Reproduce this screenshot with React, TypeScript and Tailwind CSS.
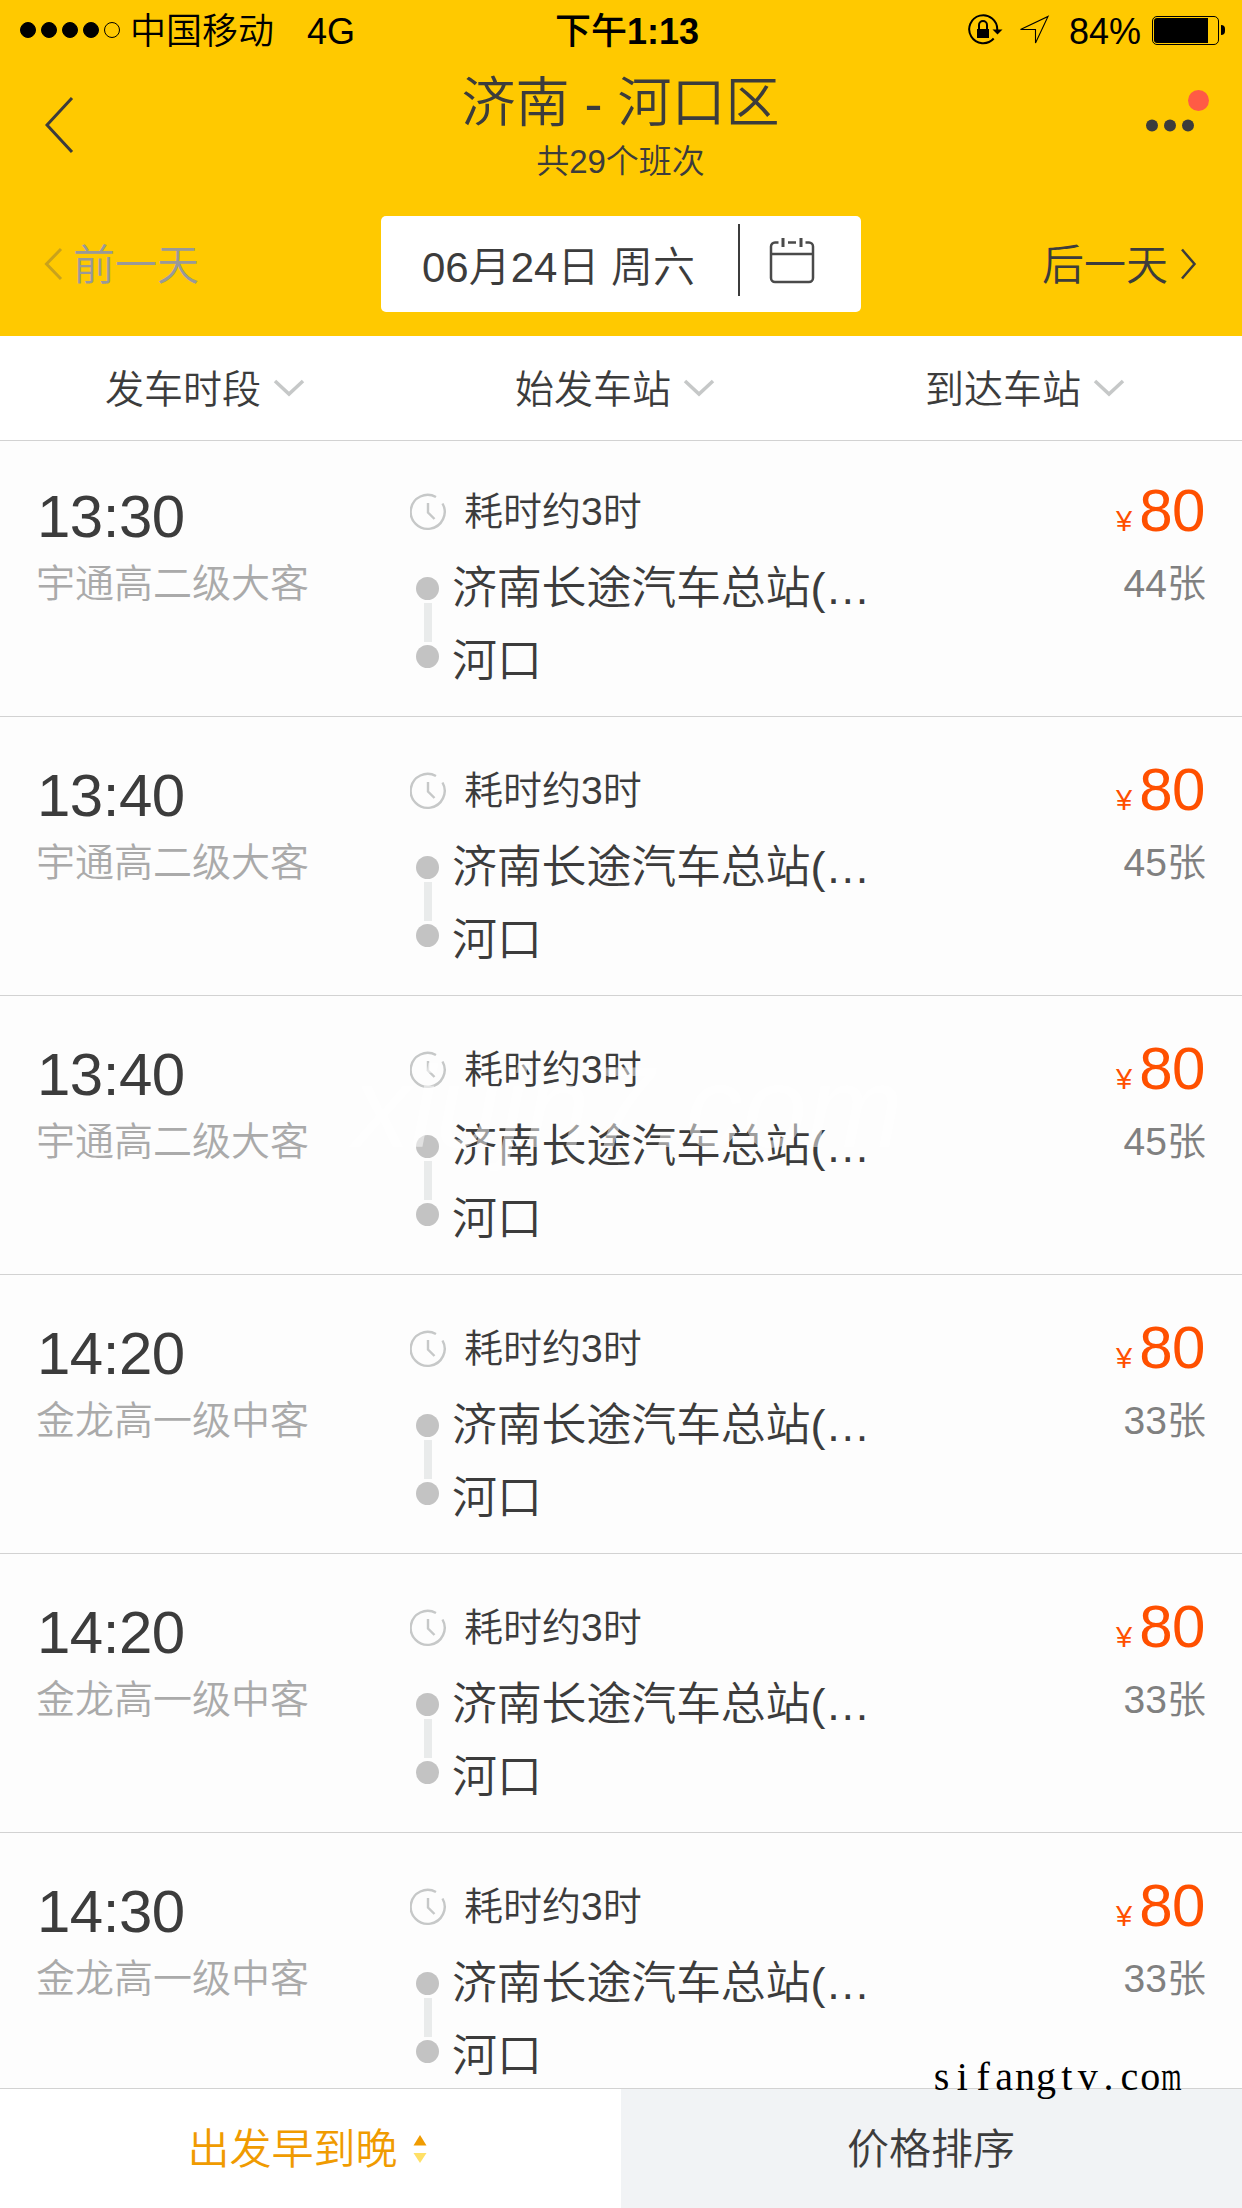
import clsx from 'clsx';

const filters = ['发车时段', '始发车站', '到达车站'];

const trips = [
  { time: '13:30', bus: '宇通高二级大客', price: 80, left: 44 },
  { time: '13:40', bus: '宇通高二级大客', price: 80, left: 45 },
  { time: '13:40', bus: '宇通高二级大客', price: 80, left: 45 },
  { time: '14:20', bus: '金龙高一级中客', price: 80, left: 33 },
  { time: '14:20', bus: '金龙高一级中客', price: 80, left: 33 },
  { time: '14:30', bus: '金龙高一级中客', price: 80, left: 33 },
];

function StatusBar() {
  return (
    <div className="relative flex h-[60px] items-center justify-between pl-5 pr-[17px] text-[36px] leading-[60px] text-black">
      <div className="flex items-center">
        <div className="flex gap-[5px]">
          {[0, 1, 2, 3, 4].map((i) => (
            <span
              key={i}
              className={clsx('size-4 rounded-full border border-black', i < 4 && 'bg-black')}
            />
          ))}
        </div>
        <span className="ml-[10px] pt-[4px]">中国移动</span>
        <span className="ml-[33px] pt-1">4G</span>
      </div>
      <div className="absolute inset-x-0 top-[2px] pl-[12px] text-center font-medium">
        下午<span className="font-bold">1:13</span>
      </div>
      <div className="flex items-center">
        <svg className="-ml-px" width="36" height="38" viewBox="0 0 36 38" fill="none">
          <path d="M30.200 19a14 14 0 1 0-3.500 8.500" stroke="#000" strokeWidth="2" />
          <path d="M25.500 18.500h10l-5 5z" fill="#000" />
          <path d="M10 18h12v9H10z" fill="#000" />
          <path d="M12 18v-4a4 4 0 0 1 8 0v4" stroke="#000" strokeWidth="2" />
        </svg>
        <svg className="ml-[16px]" width="32" height="34" viewBox="0 0 32 34" fill="none">
          <path d="M1.500 16.500 29 3.500 16.500 30V16.500z" stroke="#000" strokeWidth="1.100" />
        </svg>
        <span className="ml-[18px] pt-1">84%</span>
        <div className="ml-[11px] h-[29px] w-[67px] rounded-[5px] border border-black p-px">
          <div className="h-full w-[54px] rounded-l-[3px] bg-black" />
        </div>
        <div className="ml-[2px] h-[10px] w-1 rounded-r-full bg-black" />
      </div>
    </div>
  );
}

function Header() {
  return (
    <header className="h-[336px] bg-[#ffc900] text-[#3c3c3c]">
      <StatusBar />
      <div className="flex h-[134px] justify-between pl-[45px] pr-[33px]">
        <svg className="mt-[36px]" width="51" height="58" viewBox="0 0 51 58" fill="none">
          <path d="M27 2 2 29l25 27" stroke="#3c3c3c" strokeWidth="3" />
        </svg>
        <div className="flex flex-col items-center">
          <h1 className="mt-[15px] text-[54px] leading-[56px]">济南 - 河口区</h1>
          <p className="mt-[12px] text-[33px] leading-[38px]">共29个班次</p>
        </div>
        <svg className="mt-[28px]" width="64" height="50" viewBox="0 0 64 50">
          <circle cx="7" cy="37.500" r="6" fill="#3c3c3c" />
          <circle cx="25" cy="37.500" r="6" fill="#3c3c3c" />
          <circle cx="43" cy="37.500" r="6" fill="#3c3c3c" />
          <circle cx="53.500" cy="12.500" r="10.500" fill="#ff5b45" />
        </svg>
      </div>
      <div className="mt-[22px] flex h-24 items-center justify-between pl-[44px] pr-[44px] text-[42px]">
        <div className="flex w-[156px] items-center text-[#999]">
          <svg width="19" height="34" viewBox="0 0 19 34" fill="none">
            <path d="M17 2 2.500 17 17 32" stroke="#c9a21c" strokeWidth="3" />
          </svg>
          <span className="ml-[10px] pt-[2px]">前一天</span>
        </div>
        <div className="flex h-24 w-[480px] items-center rounded-[5px] bg-white pl-[41px]">
          <span className="w-[316px] whitespace-nowrap pt-[7px]">06月24日 周六</span>
          <span className="-mt-[8px] h-[72px] w-[2px] bg-[#3c3c3c]" />
          <svg className="-mt-[7px] ml-[29px]" width="46" height="48" viewBox="0 0 46 48" fill="none" stroke="#4a4a4a">
            <path d="M9.500 5.500H6a4 4 0 0 0-4 4V41a4 4 0 0 0 4 4h34a4 4 0 0 0 4-4V9.500a4 4 0 0 0-4-4h-3.500M19 5.500h8M2 17h42" strokeWidth="2.500" />
            <path d="M14 1v9M32 1v9" strokeWidth="3" />
          </svg>
        </div>
        <div className="flex w-[156px] items-center">
          <span className="whitespace-nowrap pt-[2px]">后一天</span>
          <svg className="ml-[12px] shrink-0" width="17" height="34" viewBox="0 0 17 34" fill="none">
            <path d="M2 2.500 14.500 17 2 31.500" stroke="#3c3c3c" strokeWidth="2.500" />
          </svg>
        </div>
      </div>
    </header>
  );
}

function TripRow({ trip }: { trip: (typeof trips)[number] }) {
  return (
    <li className="flex h-[279px] shrink-0 border-b border-[#d2d2d2] px-9">
      <div className="w-[374px] pt-[49px]">
        <div className="pl-px text-[60px] leading-[60px] tracking-[-0.5px]">{trip.time}</div>
        <div className="mt-[15px] text-[39px] leading-[44px] text-[#aaa]">{trip.bus}</div>
      </div>
      <div className="pt-[52px]">
        <div className="flex items-center text-[39px] leading-[44px]">
          <svg width="36" height="38" viewBox="0 0 36 38" fill="none" stroke="#c6c8c8" strokeWidth="2.400">
            <path d="M26 4A17 17 0 1 0 32.500 10.500" />
            <path d="M18 10v9.500l6.500 6.500" />
          </svg>
          <span className="ml-[18px]">耗时约3时</span>
        </div>
        <div className="mt-[30px] flex pl-[6px] text-[45px]">
          <div className="mt-[13px] flex flex-col items-center">
            <span className="size-[23px] rounded-full bg-[#c3c3c3]" />
            <span className="my-[3px] h-[39px] w-2 bg-[#e9ebeb]" />
            <span className="size-[23px] rounded-full bg-[#c3c3c3]" />
          </div>
          <div className="ml-[13px]">
            <div className="leading-[50px] tracking-[-0.2px]">济南长途汽车总站(…</div>
            <div className="mt-[23px] leading-[50px]">河口</div>
          </div>
        </div>
      </div>
      <div className="ml-auto pt-[43px] text-right">
        <div className="flex items-baseline justify-end gap-[7px] pr-px text-[60px] leading-[60px] text-[#ff5000]">
          <span className="text-[29px] leading-none">¥</span>
          <span className="tracking-[-0.5px]">{trip.price}</span>
        </div>
        <div className="mt-[21px] text-[39px] leading-[44px] text-[#808080]">{trip.left}张</div>
      </div>
    </li>
  );
}

export default function App() {
  return (
    <div className="relative flex h-[2208px] w-[1242px] flex-col overflow-hidden bg-[#fdfdfd] font-['Liberation_Sans','Noto_Sans_CJK_SC',sans-serif] font-[350] text-[#3c3c3c]">
      <Header />
      <nav className="z-10 h-[105px] shrink-0 border-b border-[#d2d2d2] bg-white">
        <div className="grid h-[104px] w-[1230px] grid-cols-3 text-[39px]">
          {filters.map((name) => (
            <div key={name} className="flex items-center justify-center gap-3">
              <span className="pt-[4px]">{name}</span>
              <svg width="32" height="18" viewBox="0 0 32 18" fill="none">
                <path d="M2 2l14 13L30 2" stroke="#c6c8c8" strokeWidth="3.500" />
              </svg>
            </div>
          ))}
        </div>
      </nav>
      <ul className="-mt-[3px] flex min-h-0 flex-1 flex-col overflow-hidden">
        {trips.map((trip, idx) => (
          <TripRow key={idx} trip={trip} />
        ))}
      </ul>
      <footer className="grid h-[120px] shrink-0 grid-cols-2 border-t border-[#d2d2d2] text-[42px]">
        <div className="flex items-center justify-center gap-[15px] bg-white pr-[7px] text-[#f09b00]">
          <span className="pt-[2px]">出发早到晚</span>
          <svg width="14" height="30" viewBox="0 0 14 30">
            <path d="M7 1l6.500 10.500H.5z" fill="#f09b00" />
            <path d="M7 29l6.500-10H.5z" fill="#ffe066" />
          </svg>
        </div>
        <div className="flex items-center justify-center bg-[#f1f3f5] pt-[2px] pr-px">价格排序</div>
      </footer>

      <div className="absolute left-[353px] top-[1047px] text-[115px] italic leading-[120px] text-white/50">
        xiujn7.com
      </div>
      <div className="absolute left-[931px] top-[2054px] flex font-['Liberation_Serif',serif] text-[40px] font-normal leading-[46px] text-black">
        {'sifangtv.com'.split('').map((ch, i) => (
          <span key={i} className={clsx('flex w-[20.9px] justify-center', ch === 'm' && 'scale-x-65')}>
            {ch}
          </span>
        ))}
      </div>
    </div>
  );
}
